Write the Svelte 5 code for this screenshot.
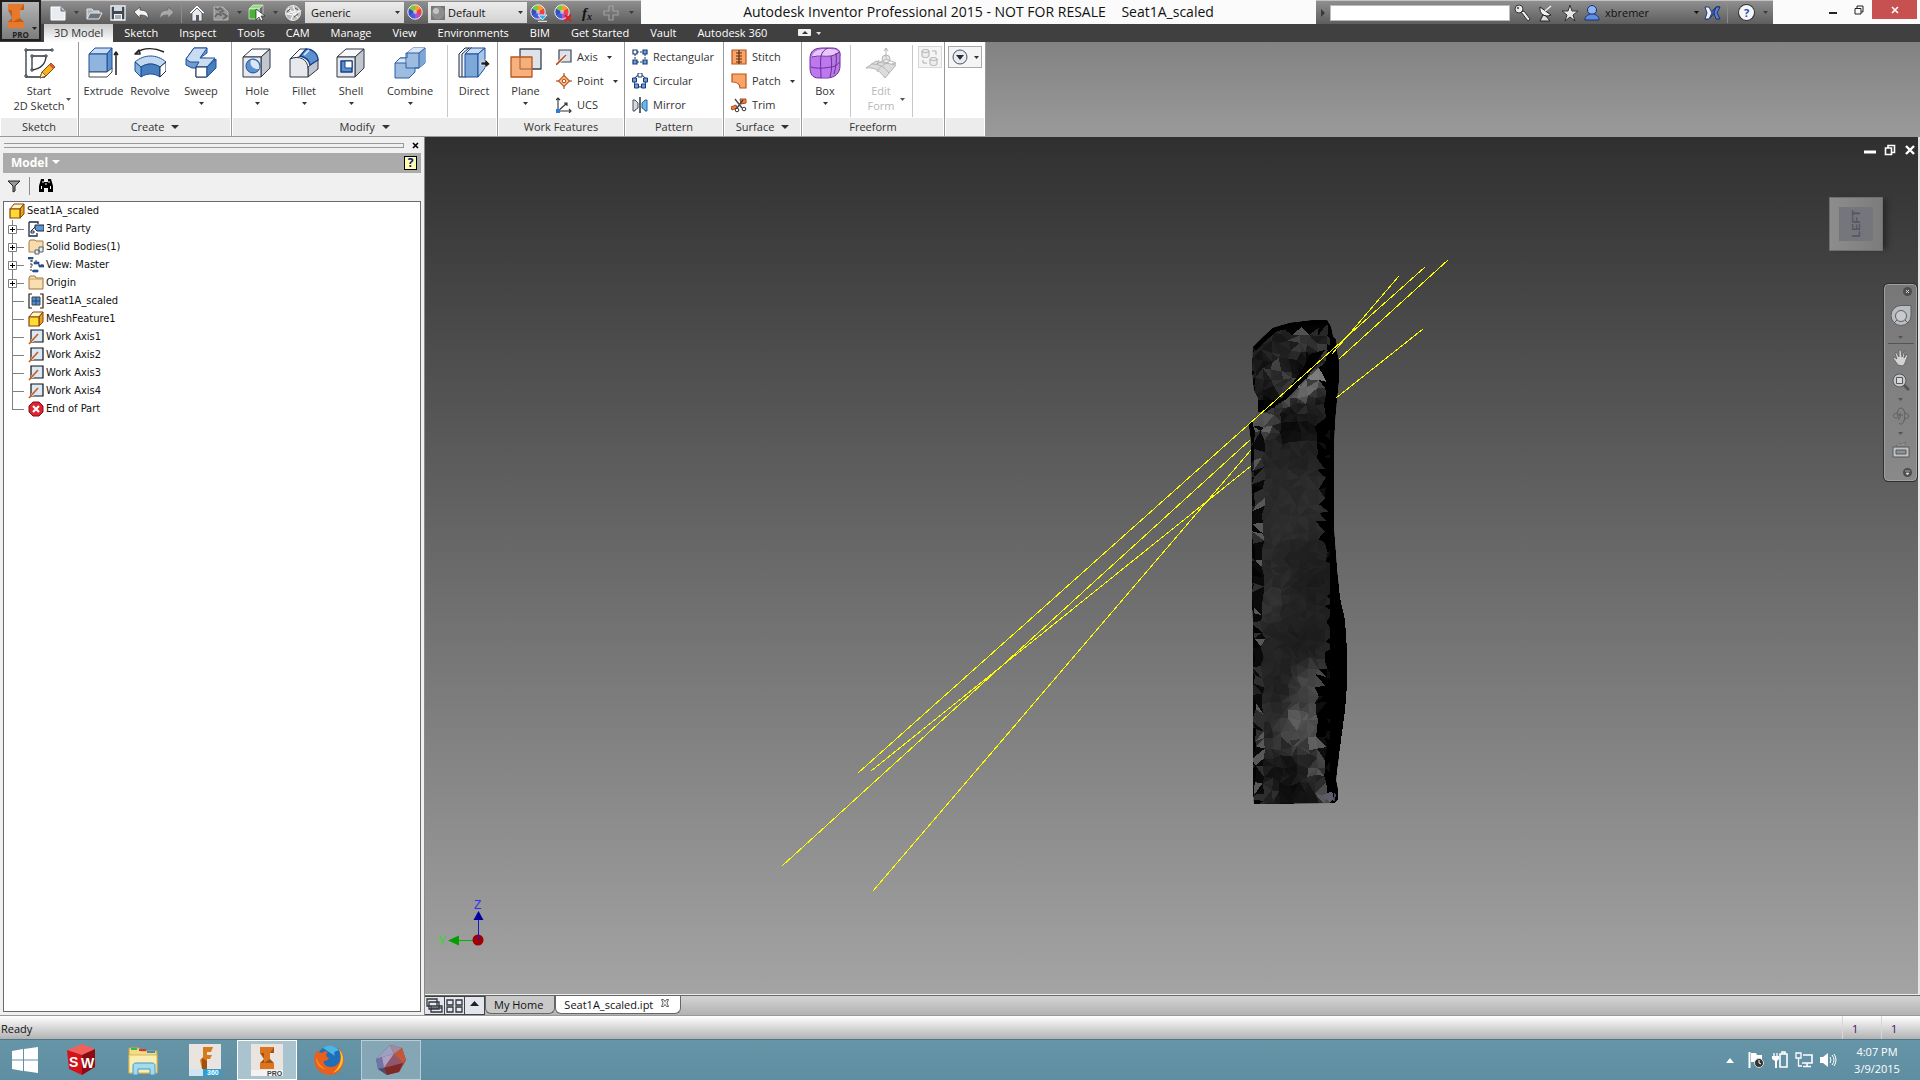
<script>
	const tabs = ['3D Model', 'Sketch', 'Inspect', 'Tools', 'CAM', 'Manage', 'View', 'Environments', 'BIM', 'Get Started', 'Vault', 'Autodesk 360'];
	let activeTab = $state('3D Model');

	const createTools = [
		{ icon: 'extrude', label: 'Extrude' },
		{ icon: 'revolve', label: 'Revolve' },
		{ icon: 'sweep', label: 'Sweep', menu: true }
	];
	const modifyTools = [
		{ icon: 'hole', label: 'Hole', menu: true },
		{ icon: 'fillet', label: 'Fillet', menu: true },
		{ icon: 'shell', label: 'Shell', menu: true },
		{ icon: 'combine', label: 'Combine', menu: true }
	];
	const workTools = [
		{ icon: 'axis', label: 'Axis', menu: true },
		{ icon: 'point', label: 'Point', menu: true },
		{ icon: 'ucs', label: 'UCS' }
	];
	const patternTools = [
		{ icon: 'rectangular', label: 'Rectangular' },
		{ icon: 'circular', label: 'Circular' },
		{ icon: 'mirror', label: 'Mirror' }
	];
	const surfaceTools = [
		{ icon: 'stitch', label: 'Stitch' },
		{ icon: 'patch', label: 'Patch', menu: true },
		{ icon: 'trim', label: 'Trim' }
	];

	const tree = [
		{ icon: 'party', label: '3rd Party', open: true },
		{ icon: 'bodies', label: 'Solid Bodies(1)', open: true },
		{ icon: 'view', label: 'View: Master', open: true },
		{ icon: 'folder', label: 'Origin', open: true },
		{ icon: 'block', label: 'Seat1A_scaled' },
		{ icon: 'part', label: 'MeshFeature1' },
		{ icon: 'workaxis', label: 'Work Axis1' },
		{ icon: 'workaxis', label: 'Work Axis2' },
		{ icon: 'workaxis', label: 'Work Axis3' },
		{ icon: 'workaxis', label: 'Work Axis4' },
		{ icon: 'end', label: 'End of Part' }
	];

	const taskbar = [
		{ icon: 'solidworks', label: 'SolidWorks' },
		{ icon: 'explorer', label: 'File Explorer' },
		{ icon: 'fusion', label: 'Fusion 360' },
		{ icon: 'inventor', label: 'Inventor', state: 'active' },
		{ icon: 'firefox', label: 'Firefox' },
		{ icon: 'meshapp', label: 'Mesh Enabler', state: 'running' }
	];

	// Work axes, each split where the mesh hides it.
	const axes = [
		[858, 773, 1425, 267],
		[782, 866, 1250, 440],
		[1339, 359, 1448, 260],
		[871, 771, 1251, 466],
		[1336, 398, 1423, 329],
		[873, 891, 1251, 450],
		[1332, 354, 1399, 276]
	];

	const outline =
		'1253,347 1262,338 1273,328 1290,323 1315,320 1327,320 1331,327 1333,337 1336,340 1337,352 1339,362 1339,378 1337,398 1335,420 1334,440 1334,530 1337,570 1340,598 1345,620 1347,650 1347,685 1345,710 1341,740 1337,770 1336,780 1338,790 1338,799 1335,803 1254,804 1253,790 1253,620 1252,600 1252,500 1251,440 1249,425 1258,412 1258,398 1254,390 1252,370';

	// Brightness samples on the body: x, y, level.
	const lights = [
		[1265, 365, 24], [1273, 369, 62], [1285, 345, 32], [1305, 339, 72], [1318, 340, 40], [1310, 352, 30],
		[1295, 370, 20], [1321, 351, 60], [1313, 361, 3], [1305, 375, 8], [1265, 388, 22], [1289, 382, 62],
		[1315, 374, 112], [1302, 388, 120], [1285, 400, 72], [1262, 420, 104], [1272, 413, 48], [1270, 400, 5],
		[1288, 415, 22], [1300, 412, 34], [1315, 405, 30], [1290, 430, 10], [1310, 425, 20], [1270, 450, 38],
		[1300, 450, 36], [1285, 490, 44], [1305, 500, 46], [1285, 530, 46], [1300, 560, 34], [1275, 570, 42],
		[1310, 580, 30], [1270, 600, 50], [1295, 610, 36], [1300, 640, 30], [1280, 660, 36], [1280, 690, 34],
		[1300, 698, 62], [1312, 690, 74], [1298, 720, 92], [1309, 728, 86], [1290, 730, 76], [1278, 712, 44],
		[1265, 735, 36], [1310, 740, 76], [1285, 745, 56], [1275, 765, 24], [1290, 768, 22], [1305, 760, 40],
		[1319, 770, 70], [1320, 780, 40], [1265, 790, 44], [1290, 792, 14], [1310, 795, 20], [1328, 797, 100]
	];

	// Where the lit face turns into the black side: y, x.
	const sideEdge = [[320, 1326], [345, 1328], [365, 1319], [400, 1322], [440, 1315], [500, 1321], [540, 1319], [575, 1331], [620, 1326], [650, 1328], [680, 1319], [715, 1312], [750, 1320], [785, 1326], [810, 1330]];

	function edgeAt(y) {
		for (let i = 1; i < sideEdge.length; i++) {
			const [y0, x0] = sideEdge[i - 1];
			const [y1, x1] = sideEdge[i];
			if (y <= y1) return x0 + ((x1 - x0) * (y - y0)) / (y1 - y0);
		}
		return 1330;
	}

	function rand(a, b) {
		const s = Math.sin(a * 127.1 + b * 311.7) * 43758.5453;
		return s - Math.floor(s);
	}

	function level(x, y) {
		const n = rand(x, y);
		if (x > edgeAt(y) + 2) return n > 0.82 && x < 1332 ? 14 : 1;
		if (y < 330) return 3;
		if (x < 1256) return n > 0.8 ? 32 : 3;
		if (x < 1262 && y > 425) return n > 0.84 ? 88 : n > 0.45 ? 46 : 10;
		let sum = 0;
		let weight = 0;
		for (const [lx, ly, l] of lights) {
			const w = 1 / ((lx - x) ** 2 + (ly - y) ** 2 + 4) ** 2;
			sum += w * l;
			weight += w;
		}
		const spread = y < 430 || y > 740 ? 0.65 : 0.2;
		return (sum / weight) * (0.95 - spread / 2 + n * spread);
	}

	function node(col, row) {
		return [1245 + col * 9 + (rand(col, row) - 0.5) * 5, 316 + row * 9 + (rand(row, col + 40) - 0.5) * 6];
	}

	function buildMesh() {
		const faces = [];
		for (let row = 0; row < 55; row++) {
			for (let col = 0; col < 12; col++) {
				const a = node(col, row);
				const b = node(col + 1, row);
				const c = node(col + 1, row + 1);
				const d = node(col, row + 1);
				const split = rand(col + 9, row) > 0.5 ? [[a, b, c], [a, c, d]] : [[a, b, d], [b, c, d]];
				for (const tri of split) {
					const x = (tri[0][0] + tri[1][0] + tri[2][0]) / 3;
					const y = (tri[0][1] + tri[1][1] + tri[2][1]) / 3;
					const v = Math.round(level(x, y));
					if (v < 2) continue;
					faces.push({
						points: tri.map((p) => p[0].toFixed(1) + ',' + p[1].toFixed(1)).join(' '),
						fill: `rgb(${v},${v},${v})`
					});
				}
			}
		}
		return faces;
	}

	const mesh = buildMesh();
</script>

{#snippet caret()}
	<svg class="caret" width="5" height="3" viewBox="0 0 5 3" aria-hidden="true"><path d="M0 0h5L2.500 3z" fill="currentColor" /></svg>
{/snippet}

{#snippet wheel(mark)}
	<svg width="18" height="18" viewBox="0 0 18 18" aria-hidden="true">
		<g stroke="none">
			<path d="M8 8V1a7 7 0 0 1 6 3.500z" fill="#ff9a2a" />
			<path d="M8 8l6-3.500a7 7 0 0 1 0 7z" fill="#f04040" />
			<path d="M8 8l6 3.500A7 7 0 0 1 8 15z" fill="#c04bd0" />
			<path d="M8 8v7a7 7 0 0 1-6-3.500z" fill="#3b62e0" />
			<path d="M8 8l-6 3.500a7 7 0 0 1 0-7z" fill="#3a49c8" />
			<path d="M8 8L2 4.500A7 7 0 0 1 8 1z" fill="#77cc3c" />
			<circle cx="8" cy="8" r="2" fill="#fff" opacity=".5" />
		</g>
		<circle cx="8" cy="8" r="7.200" fill="none" stroke="#e8eef5" />
		{#if mark === 'down'}
			<path d="M8 11h9l-4.500 5z" fill="#25b6ea" stroke="#fff" stroke-width=".8" /><path d="M8 17.300h9" stroke="#fff" />
		{:else if mark === 'clear'}
			<path d="M11 11l6 6M17 11l-6 6" stroke="#e01b1b" stroke-width="2" />
		{/if}
	</svg>
{/snippet}

{#snippet bigIcon(name)}
	<svg width="32" height="32" viewBox="0 0 32 32" stroke-linejoin="round" aria-hidden="true">
		{#if name === 'sketch'}
			<path d="M3 3h26M3 3v27h19" fill="none" stroke="#2f3640" stroke-width="1.300" />
			<path d="M9 9h14c0 7-5 13-14 14z" fill="none" stroke="#2f3640" stroke-width="1.300" />
			<g fill="#fff" stroke="#2f3640"><path d="M2 2h2v2H2zM28 2h2v2h-2zM2 28h2v2H2zM8 8h2v2H8zM22 8h2v2h-2zM8 22h2v2H8z" /></g>
			<path d="M17 31l2-6 9-9 4 4-9 9z" fill="#f6b21b" stroke="#7a4a10" />
			<path d="M17 31l2-6 4 4z" fill="#fbe7c0" stroke="#7a4a10" stroke-width=".8" /><path d="M26 18l4 4 2-2-4-4z" fill="#d8593a" />
		{:else if name === 'extrude'}
			<path d="M1 7l6-6h17l-5 6z" fill="#c9dcf2" stroke="#1b4f9c" /><path d="M19 7l5-6v21l-5 5z" fill="#5d8fcb" stroke="#1b4f9c" />
			<path d="M1 7h18v18H1z" fill="#8fb4de" stroke="#1b4f9c" /><path d="M1 25h18l5-4v4l-5 5H1z" fill="#fff" stroke="#434b57" />
			<path d="M28 28V6M26 8l2-3 2 3" fill="none" stroke="#222" stroke-width="1.500" />
		{:else if name === 'revolve'}
			<path d="M2 6c8-6 19-5 28-1M1 7l4-4 1 4z" fill="none" stroke="#222" stroke-width="1.600" />
			<path d="M1 15c9-8 22-8 31 0l-6 5c-6-4-13-4-19 0z" fill="#c2d8ef" stroke="#1b4f9c" />
			<path d="M7 20c6-4 13-4 19 0v10c-6-4-13-4-19 0z" fill="#4a7fbe" stroke="#1b4f9c" />
			<path d="M1 15v9l6 6V20z" fill="#87aedb" stroke="#1b4f9c" /><path d="M32 15v9l-6 6V20z" fill="#fff" stroke="#1a2a48" />
		{:else if name === 'sweep'}
			<path d="M1 12L9 1h13v5l-7 5 15 1v9l-9 9H11v-9H7l-6-3z" fill="#6f9cd0" stroke="#1b4f9c" />
			<path d="M1 12L9 1h13l-7 10h15l-8 9H11l3-5H5z" fill="#c9dcf2" stroke="#1b4f9c" />
			<path d="M11 20h11v10H11z" fill="#fff" stroke="#1a2a48" /><path d="M22 20l9-8v9l-9 9z" fill="#4a7fbe" stroke="#1b4f9c" />
		{:else if name === 'hole' || name === 'shell'}
			<path d="M2 10l9-8h18l-9 8z" fill="#f8f9fb" stroke="#2e3642" /><path d="M20 10l9-8v19l-9 9z" fill="#c2c6cf" stroke="#2e3642" />
			<path d="M2 10h18v20H2z" fill="#e7e9ee" stroke="#2e3642" />
			{#if name === 'hole'}
				<circle cx="12" cy="19" r="7" fill="#5d90cf" stroke="#1b4f9c" /><path d="M10 13a7 7 0 0 1 8 9c-6 1-10-4-8-9z" fill="#d9e7f6" />
			{:else}
				<path d="M6 14h11v11H6z" fill="#5d90cf" stroke="#16408a" stroke-width="1.500" /><path d="M10 14h7v7h-7z" fill="#fff" stroke="#16408a" />
			{/if}
		{:else if name === 'fillet'}
			<path d="M2 12l10-10h7l-8 8z" fill="#fafbfc" stroke="#2e3642" />
			<path d="M20 28V20l10-8v10l-10 8z" fill="#c2c6cf" stroke="#2e3642" />
			<path d="M2 12c9-4 18 0 18 10v8H2z" fill="#e7e9ee" stroke="#2e3642" />
			<path d="M12 9l6-7c7 0 12 5 12 11l-8 5c-1-5-5-8-10-9z" fill="#5d90cf" stroke="#16408a" stroke-width="1.300" /><path d="M16 8l5-5" stroke="#c7dcf5" stroke-width="2" />
		{:else if name === 'combine'}
			<path d="M1 16l5-5h7V6l6-5h12v15l-6 5h-4v4l-6 6H1z" fill="#9dbce0" stroke="#2b5ea8" />
			<path d="M13 6l6-5h12l-6 5z" fill="#d7e5f5" /><path d="M25 6l6-5v15l-6 5z" fill="#7da6d6" /><path d="M1 16l5-5h7v5z" fill="#d7e5f5" />
			<path d="M12 6h13v15H12V6M25 6l6-5M1 16h11M1 16l5-5h6" fill="none" stroke="#2b5ea8" />
		{:else if name === 'direct'}
			<path d="M1 7l6-6h7L8 7v23H1z" fill="#eef3fa" stroke="#1a2a48" /><path d="M4 30V7l7-6" fill="none" stroke="#1a2a48" />
			<path d="M7 7l6-6h14l-7 6z" fill="#c9dcf2" stroke="#1b4f9c" /><path d="M7 7h13v23H7z" fill="#7ea8d8" stroke="#1b4f9c" /><path d="M20 7l7-6v20l-7 9z" fill="#a9c5e8" stroke="#1b4f9c" />
			<path d="M23 15h4v-3l5 5-5 4v-3h-4z" fill="#1d1d1d" stroke="#fff" stroke-width=".6" />
		{:else if name === 'plane'}
			<path d="M10 2h21v20H10z" fill="#dfe3e9" stroke="#38424f" stroke-width="1.300" /><path d="M1 10h21v20H1z" fill="#f7a86f" fill-opacity=".9" stroke="#b9541a" stroke-width="1.300" /><path d="M10 10v12h12" fill="none" stroke="#a86a45" />
		{:else if name === 'box'}
			<path d="M1 12C1 4 5 1 14 1h9c6 0 9 3 8 9v9c0 7-5 12-13 12h-8C3 31 1 27 1 20z" fill="#b87be0" stroke="#6b2c9c" />
			<path d="M3 9c2-6 8-7 14-7 7 0 11 0 12 3-2 4-8 5-14 5-6 0-11 2-12-1z" fill="#e6c8fa" /><path d="M2 11c7-2 14 0 20-1 1 7 1 13-1 20-6 1-14 1-18-3z" fill="#bd78ef" />
			<path d="M3 10c7-2 13 0 19-1 4-1 7-3 9-4M22 9c1 7 1 14-1 21M2 20c6 2 14 1 20 0 4 0 8-4 9-5M12 9c-1 7 0 14 0 22M12 9c1-4 4-7 7-8M27 6c1 7 0 14-2 21" fill="none" stroke="#6b2c9c" />
		{:else if name === 'editform'}
			<g fill="#dcdcdc" stroke="#b4b4b4"><path d="M1 21l10-7c8 3 13 2 20 4l-11 13c-5-7-10-11-19-10z" /><path d="M6 17c10 0 14 4 18 9M22 16c-8 4-9 7-10 9" fill="none" />
			<circle cx="21" cy="12" r="4" fill="#e8e8e8" /><path d="M21 11V1M19 4l2-3 2 3M21 12l-9 5 2-4M21 12l10 4-4 1" fill="none" /></g>
		{/if}
	</svg>
{/snippet}

{#snippet smallIcon(name)}
	<svg width="16" height="16" viewBox="0 0 16 16" aria-hidden="true">
		{#if name === 'axis'}
			<path d="M3 1h12v12H3z" fill="#dde2e8" stroke="#3b4654" stroke-width="1.200" /><path d="M1 15L10 6" stroke="#fff" stroke-width="3" /><path d="M0 16L10 6" stroke="#b9481a" stroke-width="1.600" />
		{:else if name === 'point'}
			<path d="M8 0v16M0 8h16" stroke="#8a3c14" /><path d="M8 2.500L13.500 8 8 13.500 2.500 8z" fill="#fbc79a" stroke="#c05a1a" stroke-width="1.200" /><circle cx="8" cy="8" r="1.800" fill="#fff" stroke="#b04010" />
		{:else if name === 'ucs'}
			<path d="M2 14V1M0 3l2-2 2 2M2 14h13M13 12l2 2-2 2M2 14l9-8M8 6h3v3" fill="none" stroke="#333" stroke-width="1.100" /><path d="M0 12h4v4H0z" fill="#2b7dd4" />
		{:else if name === 'rectangular'}
			<path d="M5 3h6M5 13h6M3 5v6M13 5v6" stroke="#333" stroke-dasharray="2 1" /><path d="M1 1h4v4H1z" fill="#fff" stroke="#133a7a" stroke-width="1.200" /><path d="M11 1h4v4h-4zM1 11h4v4H1zM11 11h4v4h-4z" fill="#6fa0dd" stroke="#133a7a" stroke-width="1.200" />
		{:else if name === 'circular'}
			<circle cx="8" cy="8" r="6" fill="none" stroke="#333" /><path d="M6 0h4v4H6z" fill="#fff" stroke="#133a7a" /><path d="M.500 5h4v4h-4zM11.500 5h4v4h-4zM2.500 11h4v4h-4zM9.500 11h4v4h-4z" fill="#6fa0dd" stroke="#133a7a" />
		{:else if name === 'mirror'}
			<path d="M8 0v16" stroke="#222" stroke-width="1.400" /><path d="M1 3h2l3 3v5l-3 2v1H1z" fill="#d5dae1" stroke="#48515d" /><path d="M15 3h-2l-3 3v5l3 2v1h2z" fill="#6fb6e8" stroke="#1d6bab" />
		{:else if name === 'stitch'}
			<path d="M1 1h14v14H1z" fill="#f9a468" stroke="#b9541a" stroke-width="1.200" /><path d="M8 1v14M5 4h6M5 7h6M5 10h6M5 13h6" stroke="#5d2c0c" stroke-width="1.200" />
		{:else if name === 'patch'}
			<path d="M1 1h14v14H9c0-4-2-6-8-6z" fill="#f9a468" stroke="#b9541a" stroke-width="1.200" />
		{:else if name === 'trim'}
			<path d="M0 10l5-2 1 3-5 2zM9 2h6v4l-5 1z" fill="#f08040" stroke="#a8481a" /><path d="M4 2l7 9M12 3L6 11" stroke="#444" stroke-width="1.300" /><circle cx="6" cy="13" r="1.800" fill="none" stroke="#333" /><circle cx="13" cy="12" r="1.800" fill="none" stroke="#333" />
		{:else if name === 'part'}
			<path d="M1 6l4-5h10l-4 5z" fill="#fff7c2" stroke="#8a3f0c" /><path d="M11 6l4-5v10l-4 4z" fill="#e0a818" stroke="#8a3f0c" /><path d="M1 6h10v9H1z" fill="#ffdc32" stroke="#8a3f0c" stroke-width="1.200" />
		{:else if name === 'party'}
			<path d="M1 1h9v2M1 1v14h8v-3" fill="none" stroke="#1a2a48" stroke-width="1.300" /><path d="M3 10l5-5M3 10h3v2H3z" fill="none" stroke="#1a2a48" /><path d="M7 4h9v6H9L7 8z" fill="#5b97cc" stroke="#1a2a48" />
		{:else if name === 'bodies'}
			<path d="M1 13V3l1-2h5l1 1h7v9" fill="#f6dcae" stroke="#a27b45" /><path d="M1 13h7" stroke="#a27b45" /><path d="M7 11h4v4H7zM11 8h4v5h-4z" fill="#e8ecf2" stroke="#555f6d" />
		{:else if name === 'view'}
			<path d="M3 3v11h3M3 4h3M3 8h3M8 3v3M10 8h5" fill="none" stroke="#333" stroke-dasharray="2 1" /><path d="M0 0h5v2H0zM6 5h5v2H6zM11 8h5v2h-5zM5 13h5v2H5z" fill="#2c5fa6" stroke="#173a78" stroke-width=".6" />
		{:else if name === 'folder'}
			<path d="M1 14V3l1-2h5l1 2h7v11z" fill="#f9dfb0" stroke="#9a7341" /><path d="M1 4h14" stroke="#c69a5c" />
		{:else if name === 'block'}
			<path d="M4 1H1v14h3M12 1h3v14h-3" fill="none" stroke="#222" stroke-width="1.200" /><path d="M4 4h8v8H4z" fill="#4f8fcd" stroke="#444" /><path d="M8 4v8M4 8h8" stroke="#26486e" />
		{:else if name === 'workaxis'}
			<path d="M3 1h12v12H3z" fill="#d9e9f8" stroke="#111" stroke-width="1.200" /><path d="M6 13h-3v-3z" fill="#fff" /><path d="M1 15L10 5" stroke="#d0601c" stroke-width="1.800" />
		{:else if name === 'end'}
			<path d="M5 1h6l4 4v6l-4 4H5l-4-4V5z" fill="#dd2430" stroke="#7d1117" /><path d="M5 5l6 6M11 5l-6 6" stroke="#fff" stroke-width="2.200" />
		{/if}
	</svg>
{/snippet}

{#snippet qatIcon(name)}
	<svg width="18" height="18" viewBox="0 0 18 18" aria-hidden="true">
		{#if name === 'new'}
			<path d="M2 3h10l4 4v9H2z" fill="#e9edf2" stroke="#fff" /><path d="M12 3v4h4" fill="#aab2bd" stroke="#555" stroke-width=".8" />
		{:else if name === 'open'}
			<path d="M2 15V5h5l1 2h6v2" fill="#aeb5be" stroke="#e5e8ec" /><path d="M2 15l3-6h12l-3 6z" fill="#6c737d" stroke="#e5e8ec" />
		{:else if name === 'save'}
			<path d="M2 2h14v14H2z" fill="#3f4854" stroke="#f2f4f7" stroke-width="1.300" /><path d="M5 2h8v5H5z" fill="#d2d7de" /><path d="M5 10h8v6H5z" fill="#f5f6f8" /><path d="M6 12h6M6 14h6" stroke="#566" />
		{:else if name === 'undo'}
			<path d="M1 8l6-5v3c6 0 9 3 8 9-1-3-3-4-8-4v3z" fill="#f3f4f6" stroke="#4a4a4a" stroke-width=".8" />
		{:else if name === 'redo'}
			<path d="M17 8l-6-5v3c-6 0-9 3-8 9 1-3 3-4 8-4v3z" fill="#a8a8a8" stroke="#6a6a6a" stroke-width=".8" />
		{:else if name === 'home'}
			<path d="M1 9l8-8 8 8-2 1-6-6-6 6z" fill="#fff" stroke="#444" stroke-width=".6" /><path d="M4 9l5-5 5 5v8H4z" fill="#e6e9ed" stroke="#444" stroke-width=".7" /><path d="M8 11h3v6H8z" fill="#556" />
		{:else if name === 'update'}
			<path d="M2 3h9l5 5v8H2z" fill="#999" stroke="#b5b5b5" /><path d="M3 4l3 2 2-2 3 3-3 1 1 3-4-1-2 3M10 9l5 3-4 3" fill="none" stroke="#666" stroke-width="1.600" />
		{:else if name === 'pick'}
			<path d="M1 5l4-4h10l-4 4z" fill="#8fe07a" stroke="#eee" stroke-width=".7" /><path d="M11 5l4-4v9l-4 5z" fill="#6c6c6c" stroke="#ddd" stroke-width=".7" /><path d="M1 5h10v10H1z" fill="#4ab234" stroke="#eee" stroke-width=".7" /><path d="M8 5v11l3-3 2 4 2-1-2-4h4z" fill="#fff" stroke="#222" stroke-width=".7" />
		{:else if name === 'ball'}
			<circle cx="9" cy="9" r="7.500" fill="#b9b9b9" stroke="#e4e4e4" /><path d="M4 4l4 4-5 2 6 1-2 5M9 2l2 5 5 0-5 3 3 4M8 8l3-1v4z" fill="none" stroke="#f6f6f6" stroke-width="1.200" /><path d="M3 8l3-3M11 4l3 2M10 13l4-3" stroke="#555" />
		{:else if name === 'plus'}
			<path d="M7 2h4v5h5v4h-5v5H7v-5H2V7h5z" fill="none" stroke="#a0a0a0" stroke-width="1.200" />
		{:else if name === 'key'}
			<circle cx="6" cy="5" r="4" fill="#eee" stroke="#333" /><path d="M8 8l7 9 2-2-6-8z" fill="#eee" stroke="#333" /><circle cx="5" cy="4" r="1.200" fill="#666" />
		{:else if name === 'dish'}
			<path d="M3 3c-1 7 5 11 11 8z" fill="#f2f2f2" stroke="#222" /><path d="M8 7l6-5" stroke="#eee" stroke-width="1.600" /><path d="M6 11l-3 6h10l-4-5z" fill="#ddd" stroke="#222" />
		{:else if name === 'star'}
			<path d="M9 1l2 6h6l-5 4 2 6-5-4-5 4 2-6-5-4h6z" fill="#e6e6e6" stroke="#333" />
		{:else if name === 'user'}
			<circle cx="9" cy="6" r="4.500" fill="#8fb4f5" stroke="#15306a" /><path d="M2 16c0-4 3-5 5-6h4c2 1 5 2 5 6z" fill="#5c8ce6" stroke="#15306a" />
		{:else if name === 'exchange'}
			<path d="M17 3h-4L2 15h4z" fill="#3f66c2" stroke="#1d2f66" /><path d="M17 15h-4l-2-6 2-6h4l-3 6z" fill="#5b82d8" stroke="#1d2f66" /><path d="M2 3h4l3 6-3 6H2l2-6z" fill="#eceff8" stroke="#253a7a" />
		{/if}
	</svg>
{/snippet}

{#snippet taskIcon(name)}
	<svg width="32" height="32" viewBox="0 0 32 32" aria-hidden="true">
		{#if name === 'solidworks'}
			<path d="M2 6L17 0l13 5-13 6z" fill="#f1605a" /><path d="M2 6l15 5v20L4 25z" fill="#d3121c" /><path d="M17 11l13-6v18l-13 8z" fill="#8c0a10" />
			<text x="4" y="23" font-family="Liberation Sans" font-weight="700" font-size="14" fill="#fff">S</text><text x="16" y="24" font-family="Liberation Sans" font-weight="700" font-size="14" fill="#fff">W</text>
		{:else if name === 'explorer'}
			<path d="M2 29V4h10l2 3h16v22z" fill="#f4dc84" stroke="#c9a545" /><path d="M4 4h6v2H4z" fill="#39b54a" /><path d="M12 5h7v2h-7z" fill="#d33" /><path d="M20 7h8v2h-8z" fill="#3a8ed8" />
			<path d="M2 11h28v18H2z" fill="#fbeeb2" stroke="#d5b75c" /><path d="M6 31v-9c0-2 1-3 3-3h16c2 0 3 1 3 3v9h-5v-6H11v6z" fill="#a5d9f0" stroke="#3e9cc7" />
		{:else if name === 'fusion' || name === 'inventor'}
			<path d="M0 0h32v32H0z" fill="#e9e4df" />
			{#if name === 'fusion'}
				<path d="M14 3h10l-2 5h-4v3h5l-2 4h-3v10h-5l-2-9 3-3z" fill="#d87a1c" /><path d="M13 14l5 3v8h-5z" fill="#a3500e" />
				<path d="M0 25h32v7H0z" fill="#cfe6f2" /><path d="M14 25h18v7H14z" fill="#2d9fd2" /><text x="18" y="31" font-family="Liberation Sans" font-weight="700" font-size="7" fill="#fff">360</text>
			{:else}
				<path d="M9 3h14v6h-4v10h4v6H9v-6h4V9H9z" fill="#d9761f" /><path d="M9 9h4v10H9l4-4zM19 9l4-6v6zM13 19h10l-4-4z" fill="#a8500f" />
				<path d="M0 26h32v6H0z" fill="#f3f3f3" /><text x="16" y="32" font-family="Liberation Sans" font-weight="700" font-size="7" fill="#444">PRO</text>
			{/if}
		{:else if name === 'firefox'}
			<circle cx="17" cy="15" r="13" fill="#1f6fb8" /><path d="M10 4c5-4 14-2 16 3-4-1-6 2-4 5z" fill="#4cb4e6" />
			<path d="M4 6c-6 10-2 24 12 25 11 1 17-11 14-20-1-4-3-6-4-6 5 10-1 18-8 18-6 0-8-4-7-6 2 0 4-1 5-3-3-1-4-4-1-6-4-1-5 0-6 1-2 0-4-1-5-3z" fill="#e8601c" />
			<path d="M26 5c8 9 3 21-6 24 9-8 9-16 6-24z" fill="#fcc32b" /><path d="M3 13c2 6 5 10 10 12-6 0-10-5-10-12z" fill="#f89a24" />
		{:else if name === 'meshapp'}
			<path d="M15 1l12 3 4 12-7 12-12 3-9-6-2-10z" fill="#8b4a55" />
			<path d="M15 1L1 15l6-2 12-3z" fill="#9ba0c4" /><path d="M15 1l4 9 8-6z" fill="#a3899b" /><path d="M27 4l-8 6 9 9 3-3z" fill="#c4573a" />
			<path d="M1 15l6-2 2 11-6 1z" fill="#6d76a7" /><path d="M7 13l12-3-10 14z" fill="#a9a0c2" /><path d="M19 10l9 9-19 5z" fill="#91566a" /><path d="M28 19l3-3-7 12z" fill="#b4442b" /><path d="M9 24l19-5-4 9-12 3z" fill="#7d2a26" /><path d="M3 25l6-1 3 7z" fill="#4d4c72" />
		{/if}
	</svg>
{/snippet}

{#snippet bigTool(tool)}
	<button class="big">
		{@render bigIcon(tool.icon)}
		<span>{tool.label}</span>
		{#if tool.menu}{@render caret()}{/if}
	</button>
{/snippet}

{#snippet smallTool(tool)}
	<button class="small">
		{@render smallIcon(tool.icon)}
		<span>{tool.label}</span>
		{#if tool.menu}{@render caret()}{/if}
	</button>
{/snippet}

<div class="window">
	<header class="top">
		<button class="app-button" aria-label="Application menu">
			<svg width="18" height="26" viewBox="0 0 18 26" aria-hidden="true"><path d="M1 1h16v6h-4v12h4v6H1v-6h4V7H1z" fill="#e8792b" /><path d="M1 7h4v12H1l4-4zM13 7l4-6v6zM5 19h12l-4-4z" fill="#b85414" opacity=".8" /></svg>
			{@render caret()}
			<span>PRO</span>
		</button>
		<div class="bars">
			<div class="titlebar">
				<div class="qat">
					<button class="q" aria-label="New">{@render qatIcon('new')}</button>
					<button class="drop" aria-label="New options">{@render caret()}</button>
					<button class="q" aria-label="Open">{@render qatIcon('open')}</button>
					<button class="q" aria-label="Save">{@render qatIcon('save')}</button>
					<button class="q" aria-label="Undo">{@render qatIcon('undo')}</button>
					<button class="q" aria-label="Redo">{@render qatIcon('redo')}</button>
					<i class="bar-sep"></i>
					<button class="q" aria-label="Home">{@render qatIcon('home')}</button>
					<button class="q" aria-label="Update">{@render qatIcon('update')}</button>
					<button class="drop" aria-label="Update options">{@render caret()}</button>
					<button class="q" aria-label="Select">{@render qatIcon('pick')}</button>
					<button class="drop" aria-label="Select options">{@render caret()}</button>
					<button class="q" aria-label="Material browser">{@render qatIcon('ball')}</button>
					<label class="combo">
						<select aria-label="Material"><option>Generic</option></select>
						{@render caret()}
					</label>
					<button class="q" aria-label="Appearance browser">{@render wheel('')}</button>
					<label class="combo with-ball">
						<svg width="14" height="14" viewBox="0 0 14 14" aria-hidden="true"><path d="M0 0h14v14H0z" fill="#777" /><circle cx="7" cy="7" r="6.500" fill="#8d8d8d" /><circle cx="5" cy="5" r="3" fill="#c4c4c4" /></svg>
						<select aria-label="Appearance"><option>Default</option></select>
						{@render caret()}
					</label>
					<button class="q" aria-label="Adjust">{@render wheel('down')}</button>
					<button class="q" aria-label="Clear">{@render wheel('clear')}</button>
					<button class="q fx" aria-label="Parameters">f<sub>x</sub></button>
					<button class="q" aria-label="Add">{@render qatIcon('plus')}</button>
					<button class="drop last" aria-label="Customize">{@render caret()}</button>
				</div>
				<h1>Autodesk Inventor Professional 2015 - NOT FOR RESALE <span>Seat1A_scaled</span></h1>
				<div class="info">
					<button class="side" aria-label="Collapse">
						<svg width="4" height="8" viewBox="0 0 4 8" aria-hidden="true"><path d="M0 0l4 4-4 4z" fill="#3a3a3a" /></svg>
					</button>
					<input type="text" aria-label="Search help" />
					<button class="q" aria-label="Subscription">{@render qatIcon('key')}</button>
					<button class="q" aria-label="Communication">{@render qatIcon('dish')}</button>
					<button class="q" aria-label="Favorites">{@render qatIcon('star')}</button>
					<button class="user">{@render qatIcon('user')}<span>xbremer</span>{@render caret()}</button>
					<button class="q" aria-label="Exchange apps">{@render qatIcon('exchange')}</button>
					<i class="bar-sep"></i>
					<button class="help" aria-label="Help">?</button>
					<button class="drop" aria-label="Help options">{@render caret()}</button>
				</div>
				<div class="wincontrols">
					<button aria-label="Minimize"><svg width="10" height="10" viewBox="0 0 10 10"><path d="M1 8h8" stroke="#222" stroke-width="2" /></svg></button>
					<button aria-label="Restore"><svg width="10" height="10" viewBox="0 0 10 10"><path d="M1 3.500h6V9H1zM3 3V1h6v6H7" fill="none" stroke="#222" /></svg></button>
					<button class="close" aria-label="Close"><svg width="8" height="8" viewBox="0 0 8 8"><path d="M1 1l6 6M7 1L1 7" stroke="#fff" stroke-width="1.600" /></svg></button>
				</div>
			</div>
			<nav class="tabs">
				{#each tabs as tab (tab)}
					<button class:active={tab === activeTab} onclick={() => (activeTab = tab)}>{tab}</button>
				{/each}
				<button class="minimize" aria-label="Minimize ribbon">
					<svg width="24" height="8" viewBox="0 0 24 8" aria-hidden="true"><rect width="13" height="7" rx="1" fill="#f0f0f0" /><path d="M4 5l3-3 3 3z" fill="#333" /><path d="M18 3h5l-2 3z" fill="#ddd" /></svg>
				</button>
			</nav>
		</div>
	</header>

	<section class="ribbon">
		<div class="panel">
			<div class="tools single">
				<button class="big two-line">{@render bigIcon('sketch')}<span>Start<br />2D Sketch</span></button>
				<button class="side-drop" aria-label="Sketch options">{@render caret()}</button>
			</div>
			<h2>Sketch</h2>
		</div>
		<div class="panel">
			<div class="tools create">{#each createTools as tool (tool.label)}{@render bigTool(tool)}{/each}</div>
			<h2>Create <i class="tri"></i></h2>
		</div>
		<div class="panel">
			<div class="tools modify">
				{#each modifyTools as tool (tool.label)}{@render bigTool(tool)}{/each}
				<i class="tool-sep"></i>
				{@render bigTool({ icon: 'direct', label: 'Direct' })}
			</div>
			<h2>Modify <i class="tri"></i></h2>
		</div>
		<div class="panel">
			<div class="tools work">
				{@render bigTool({ icon: 'plane', label: 'Plane', menu: true })}
				<div class="stack">{#each workTools as tool (tool.label)}{@render smallTool(tool)}{/each}</div>
			</div>
			<h2>Work Features</h2>
		</div>
		<div class="panel">
			<div class="tools lone"><div class="stack">{#each patternTools as tool (tool.label)}{@render smallTool(tool)}{/each}</div></div>
			<h2>Pattern</h2>
		</div>
		<div class="panel">
			<div class="tools lone"><div class="stack">{#each surfaceTools as tool (tool.label)}{@render smallTool(tool)}{/each}</div></div>
			<h2>Surface <i class="tri"></i></h2>
		</div>
		<div class="panel">
			<div class="tools freeform">
				{@render bigTool({ icon: 'box', label: 'Box', menu: true })}
				<i class="tool-sep"></i>
				<button class="big two-line" disabled>{@render bigIcon('editform')}<span>Edit<br />Form</span></button>
				<button class="side-drop" aria-label="Edit form options">{@render caret()}</button>
				<i class="tool-sep"></i>
				<button class="framed" aria-label="Convert" disabled>
					<svg width="18" height="18" viewBox="0 0 18 18"><g fill="#ececec" stroke="#b0b0b0"><path d="M1 3v5c0 2 7 2 7 0V3c0-2-7-2-7 0s7 2 7 0M9 11v5c0 2 7 2 7 0v-5c0-2-7-2-7 0s7 2 7 0" /><path d="M11 3h4v4M2 12v3h4" fill="none" /></g></svg>
				</button>
			</div>
			<h2>Freeform</h2>
		</div>
		<div class="panel">
			<div class="tools lone">
				<button class="framed wide" aria-label="Select options">
					<svg width="16" height="16" viewBox="0 0 16 16"><circle cx="8" cy="8" r="7" fill="#e8ebef" stroke="#4a5360" /><path d="M4 6h8l-4 5z" fill="#252c3a" /></svg>
					{@render caret()}
				</button>
			</div>
			<h2></h2>
		</div>
		<div class="ribbon-rest"></div>
	</section>

	<main>
		<aside>
			<div class="grip"><i></i><button aria-label="Close browser"><svg width="7" height="7" viewBox="0 0 7 7"><path d="M1 1l5 5M6 1L1 6" stroke="#000" stroke-width="1.600" /></svg></button></div>
			<div class="browser-title">
				<button>Model <i class="tri"></i></button>
				<button class="hint" aria-label="Help">?</button>
			</div>
			<div class="browser-tools">
				<button aria-label="Filter"><svg width="14" height="13" viewBox="0 0 14 13"><path d="M1 1h12L8 6v5l-2 1V6z" fill="#999" stroke="#222" /></svg></button>
				<i></i>
				<button aria-label="Find"><svg width="16" height="14" viewBox="0 0 16 14"><path d="M3 0h3v3h4V0h3l2 7v6h-5V9H6v4H1V7z" fill="#000" /><path d="M3.500 7v3M12.500 7v3M8 4v2M5 2v2M11 2v2" stroke="#fff" /></svg></button>
			</div>
			<div class="tree">
				<div class="root">{@render smallIcon('part')}<span>Seat1A_scaled</span></div>
				<ul>
					{#each tree as item (item.label + item.icon)}
						<li>
							<span class="branch">{#if item.open}<button class="expand" aria-label="Expand {item.label}"><svg width="9" height="9" viewBox="0 0 9 9"><path d="M.500.500h8v8h-8z" fill="#fff" stroke="#808080" /><path d="M2 4.500h5M4.500 2v5" stroke="#000" /></svg></button>{/if}</span>
							{@render smallIcon(item.icon)}<span class="name">{item.label}</span>
						</li>
					{/each}
				</ul>
			</div>
		</aside>

		<div class="document">
			<div class="viewport">
				<svg class="scene" viewBox="425 137 1493 857" preserveAspectRatio="xMinYMin slice" aria-label="Model view">
					<defs><clipPath id="body-outline"><polygon points={outline} /></clipPath></defs>
					<polygon points={outline} fill="#000" shape-rendering="crispEdges" />
					<g clip-path="url(#body-outline)" shape-rendering="crispEdges">
						{#each mesh as face, i (i)}<polygon points={face.points} fill={face.fill} />{/each}
						<path d="M1253 347L1273 328 1290 323 1329 320" fill="none" stroke="#000" stroke-width="9" />
						<path d="M1332 325v478M1336 340v450" fill="none" stroke="#000" stroke-width="5" />
						<path d="M1325 350L1308 376 1288 398 1266 412 1258 412 1258 400 1280 400 1302 370 1310 354z" fill="#020202" />
						<path d="M1322 796l8-4 3 1v7l-3 2z" fill="#5c5c6c" /><path d="M1334 793l2 1-1 7h-2z" fill="#4a4a52" />
					</g>
					<g stroke="#ffff00" shape-rendering="crispEdges">
						{#each axes as [x1, y1, x2, y2], i (i)}<line {x1} {y1} {x2} {y2} />{/each}
					</g>
					<path d="M459 940.500h19" stroke="#00b400" /><path d="M448 940.500l11-5v10z" fill="#00a000" />
					<circle cx="478" cy="940" r="5.500" fill="#a00000" />
					<path d="M478.500 940v-22" stroke="#1818c8" /><path d="M478.500 911l5 9h-10z" fill="#0000a0" />
					<text x="474" y="909" fill="#3030f0">Z</text><text x="438" y="945" fill="#20e020">Y</text>
				</svg>
				<div class="doc-controls">
					<button aria-label="Minimize document"><svg width="12" height="12" viewBox="0 0 12 12"><path d="M0 8h12" stroke="#fff" stroke-width="3" /></svg></button>
					<button aria-label="Restore document"><svg width="12" height="12" viewBox="0 0 12 12"><path d="M1.500 4h6v6.500h-6zM4 3.500v-2h6.500v7H8" fill="none" stroke="#fff" stroke-width="1.600" /></svg></button>
					<button aria-label="Close document"><svg width="12" height="12" viewBox="0 0 12 12"><path d="M2 2l8 8M10 2l-8 8" stroke="#fff" stroke-width="2.400" /></svg></button>
				</div>
				<button class="viewcube"><span>LEFT</span></button>
				<div class="navbar">
					<button class="corner" aria-label="Close navigation bar"><svg width="9" height="9" viewBox="0 0 9 9"><circle cx="4.500" cy="4.500" r="4.500" fill="#4d4d4d" /><path d="M3 3l3 3M6 3L3 6" stroke="#ddd" /></svg></button>
					<button class="steer" aria-label="Steering wheel"><svg width="22" height="22" viewBox="0 0 22 22"><path d="M11 .500h10V11A10 10 0 1 1 11 .500z" fill="#b9bcc0" stroke="#5c5f62" /><circle cx="11" cy="11" r="5.500" fill="#c8cacd" stroke="#5c5f62" /><path d="M4 18l3-3M18 18l-3-3" stroke="#5c5f62" /></svg>{@render caret()}</button>
					<hr />
					<button aria-label="Pan"><svg width="18" height="18" viewBox="0 0 18 18"><path d="M6 16L1 9l1-1 3 2-2-6 1-1 3 5V1h2l1 7 2-6h1l-1 7 3-4 1 1-3 8-2 3z" fill="#d3d3d3" stroke="#5c5f62" stroke-width=".8" /></svg></button>
					<button aria-label="Zoom"><svg width="18" height="18" viewBox="0 0 18 18"><path d="M12 12l5 5" stroke="#555" stroke-width="3" /><circle cx="7.500" cy="7.500" r="6.500" fill="#c4c6c8" stroke="#55585a" /><path d="M4.500 4.500h6v6h-6z" fill="#d9d9d9" stroke="#55585a" /></svg>{@render caret()}</button>
					<button aria-label="Orbit"><svg width="18" height="18" viewBox="0 0 18 18"><g fill="none" stroke="#5c5f62"><path d="M7 13C4 5 6 1 9 1s5 5 3 13c-1 3-4 4-5 2M5 6C0 7 0 11 5 11M13 6c5 1 5 5 0 6" /><path d="M8 6v5M6 8h5" /></g></svg>{@render caret()}</button>
					<button aria-label="Look at"><svg width="18" height="18" viewBox="0 0 18 18"><path d="M1 6h16v10H1z" fill="#bfc1c3" stroke="#55585a" /><path d="M4 9h10v4H4z" fill="#8e9092" stroke="#55585a" /><path d="M4 5l4-3v2l6-3-3 4z" fill="#aaa" stroke="#666" stroke-width=".7" /></svg></button>
					<button class="corner" aria-label="Navigation bar options"><svg width="9" height="9" viewBox="0 0 9 9"><circle cx="4.500" cy="4.500" r="4.500" fill="#4d4d4d" /><path d="M2 3h5M3 5h3l-1.500 2z" fill="#ddd" stroke="#ddd" stroke-width=".6" /></svg></button>
				</div>
			</div>
			<div class="doc-tabs">
				<button class="sq" aria-label="Cascade"><svg width="17" height="17" viewBox="0 0 17 17"><g fill="#e6e9ee" stroke="#30343c" stroke-width="1.300"><path d="M1 2h10v7H1zM3 5h10v7H3zM5 9h11v6H5z" /><path d="M5 11h11" /></g></svg></button>
				<button class="sq" aria-label="Tile"><svg width="17" height="17" viewBox="0 0 17 17"><g fill="#e6e9ee" stroke="#30343c" stroke-width="1.300"><path d="M1 3h6v5H1zM10 3h6v5h-6zM1 10h6v5H1zM10 10h6v5h-6z" /></g></svg></button>
				<button class="sq up" aria-label="Document list"><svg width="9" height="5" viewBox="0 0 9 5"><path d="M0 5h9L4.500 0z" fill="#222" /></svg></button>
				<button class="doc-tab">My Home</button>
				<button class="doc-tab current">Seat1A_scaled.ipt <svg width="8" height="8" viewBox="0 0 8 8"><path d="M.500.500h2l1.500 2 1.500-2h2L6 4l1.500 3.500h-2L4 5.500 2.500 7.500h-2L2 4z" fill="#eee" stroke="#555" stroke-width=".9" /></svg></button>
			</div>
		</div>
	</main>

	<footer class="status"><span>Ready</span><b>1</b><b>1</b></footer>

	<div class="taskbar">
		<button class="start" aria-label="Start"><svg width="26" height="26" viewBox="0 0 26 26"><path d="M0 4l11-2v10.500H0zM12 2l14-2v12.500H12zM0 13.500h11V24L0 22zM12 13.500h14V26l-14-2z" fill="#fff" /></svg></button>
		{#each taskbar as app (app.icon)}
			<button class="task {app.state ?? ''}" aria-label={app.label}>{@render taskIcon(app.icon)}</button>
		{/each}
		<div class="tray">
			<button class="more" aria-label="Show hidden icons"><svg width="8" height="5" viewBox="0 0 8 5"><path d="M0 5h8L4 0z" fill="#fff" /></svg></button>
			<svg width="18" height="18" viewBox="0 0 18 18"><path d="M2.500 1v16" stroke="#fff" stroke-width="2" /><path d="M4 2h5l1 2h5v7H4z" fill="#fff" /><circle cx="12" cy="12" r="4.500" fill="#333" stroke="#ddd" /><path d="M12 9v3l2 1" fill="none" stroke="#fff" /></svg>
			<svg width="18" height="18" viewBox="0 0 18 18"><path d="M9 3h7v13H9zM11 1h3v2h-3z" fill="none" stroke="#fff" stroke-width="1.600" /><path d="M3 2v3M6 2v3" stroke="#fff" stroke-width="1.300" /><path d="M1 5h7v3L6 10v7H4v-7L1 8z" fill="#fff" /></svg>
			<svg width="18" height="18" viewBox="0 0 18 18"><path d="M8 4h9v8H7M12 12v3M8 15.500h8" fill="none" stroke="#fff" stroke-width="1.600" /><path d="M1 2h5v5H1zM3.500 7v8H7" fill="none" stroke="#fff" stroke-width="1.300" /></svg>
			<svg width="18" height="18" viewBox="0 0 18 18"><path d="M1 6h3l5-4v14l-5-4H1z" fill="#fff" /><path d="M11 6q2 3 0 6M13 4q4 5 0 10M15 3q4 6 0 12" fill="none" stroke="#fff" /></svg>
			<time>4:07 PM<br />3/9/2015</time>
		</div>
	</div>
</div>

<style>
	:global(body) {
		margin: 0;
	}

	.window {
		display: flex;
		flex-direction: column;
		height: 100vh;
		min-height: 600px;
		overflow: hidden;
		background: #f0f0f0;
		color: #333;
		font-family: 'Open Sans', 'Noto Sans', sans-serif;
		font-size: 11px;
		line-height: 14px;
	}

	button {
		display: flex;
		align-items: center;
		justify-content: center;
		padding: 0;
		border: 0;
		background: none;
		color: inherit;
		font: inherit;
		white-space: nowrap;
	}

	svg {
		display: block;
		flex: none;
	}

	h1,
	h2,
	ul {
		margin: 0;
		padding: 0;
		font-weight: 400;
	}

	.tri {
		display: inline-block;
		border: 4px solid transparent;
		border-top: 4px solid currentColor;
		border-bottom: 0;
		margin: 0 0 2px 4px;
	}

	/* title bar and tabs */
	.top {
		display: flex;
		flex: none;
		height: 42px;
		background: #404040;
	}

	.app-button {
		display: grid;
		grid-template-columns: 27px 10px;
		grid-template-rows: 28px 9px;
		box-sizing: border-box;
		width: 41px;
		height: 41px;
		border: 2px solid #1f1f1f;
		background: linear-gradient(#b4b4b4, #7c7c7c);
		color: #222;
		align-content: start;
		align-items: center;
		justify-items: center;
	}

	.app-button .caret,
	.app-button span {
		align-self: end;
	}

	.app-button span {
		grid-column: 1 / -1;
		font-size: 8px;
		line-height: 8px;
		font-weight: 700;
	}

	.bars {
		flex: 1;
		min-width: 0;
	}

	.titlebar {
		display: flex;
		height: 24px;
		background: #fbfbfb;
	}

	.qat,
	.info {
		display: flex;
		align-items: center;
		flex: none;
		box-sizing: border-box;
		height: 24px;
		border-top: 1px solid #c4c0c4;
		background: linear-gradient(#8f8f8f, #5d5d5d);
	}

	.qat {
		width: 600px;
		padding-left: 5px;
	}

	.q {
		width: 24px;
		height: 22px;
	}

	.drop {
		width: 12px;
		height: 22px;
		color: #3c3c3c;
	}

	.last {
		width: 16px;
	}

	.bar-sep {
		width: 1px;
		height: 20px;
		margin: 0 3px;
		background: #8c8c8c;
	}

	.combo {
		display: flex;
		align-items: center;
		box-sizing: border-box;
		width: 99px;
		height: 21px;
		padding: 0 4px 0 6px;
		background: linear-gradient(#ececec, #d2d2d2);
		color: #333;
	}

	.with-ball {
		padding-left: 3px;
		gap: 3px;
	}

	.combo select {
		flex: 1;
		min-width: 0;
		padding: 0;
		border: 0;
		background: none;
		appearance: none;
		color: #111;
		font: inherit;
	}

	.fx {
		color: #111;
		font-family: 'Liberation Serif', serif;
		font-size: 15px;
		font-style: italic;
		font-weight: 700;
	}

	.fx sub {
		font-size: 10px;
		align-self: flex-end;
	}

	h1 {
		flex: 1;
		min-width: 0;
		overflow: hidden;
		color: #111;
		font-size: 14px;
		line-height: 24px;
		text-align: center;
		white-space: nowrap;
	}

	h1 span {
		margin-left: 12px;
	}

	.info {
		width: 457px;
	}

	.side {
		width: 14px;
		height: 22px;
	}

	.info input {
		box-sizing: border-box;
		width: 180px;
		height: 16px;
		border: 1px solid #bbb;
		background: #fff;
	}

	.user {
		width: 118px;
		height: 22px;
		gap: 4px;
		padding: 0 1px;
		color: #111;
	}

	.user span {
		flex: 1;
		text-align: left;
	}

	.help {
		width: 15px;
		height: 15px;
		margin-left: 8px;
		margin-right: 5px;
		border-radius: 50%;
		background: #f4f6fa;
		box-shadow: 0 0 0 1px #333;
		color: #1a4fae;
		font-weight: 700;
	}

	.wincontrols {
		display: flex;
		align-items: flex-start;
		flex: none;
		width: 144px;
		justify-content: flex-end;
		padding-right: 3px;
	}

	.wincontrols button {
		width: 26px;
		height: 19px;
	}

	.wincontrols .close {
		width: 45px;
		background: #c75050;
	}

	.tabs {
		display: flex;
		gap: 1px;
		height: 18px;
		padding-left: 3px;
		color: #fff;
	}

	.tabs button {
		padding: 0 10px;
		height: 18px;
	}

	.tabs .active {
		background: linear-gradient(#c9c9c9, #fff);
		color: #333;
	}

	.tabs .minimize {
		padding: 0 20px;
	}

	/* ribbon */
	.ribbon {
		display: grid;
		grid-template-columns: 79px 153px 266px 127px 99px 78px 143px 41px 1fr;
		flex: none;
		height: 94px;
		border-bottom: 1px solid #999;
		background: #fff;
	}

	.panel {
		display: flex;
		flex-direction: column;
		border-right: 1px solid #9a9a9a;
	}

	.panel h2 {
		flex: none;
		height: 18px;
		margin: 0 1px;
		background: #ececec;
		font-size: 11px;
		line-height: 17px;
		text-align: center;
	}

	.ribbon-rest {
		background: linear-gradient(#828282, #9a9a9a);
	}

	.tools {
		display: grid;
		flex: 1;
		align-items: start;
		padding-top: 5px;
	}

	.single {
		grid-template-columns: 54px 8px;
		padding-left: 12px;
	}

	.create {
		grid-template-columns: 47px 46px 56px;
		padding-left: 1px;
	}

	.modify {
		grid-template-columns: 48px 46px 48px 70px 6px 46px;
		padding-left: 1px;
	}

	.work {
		grid-template-columns: 55px 1fr;
	}

	.freeform {
		grid-template-columns: 46px 14px 38px 10px 5px 26px;
	}

	.lone {
		padding-left: 4px;
	}

	.big {
		flex-direction: column;
		justify-content: flex-start;
		height: 70px;
	}

	.big span {
		margin-top: 4px;
		line-height: 16px;
	}

	.big .caret {
		margin-top: 3px;
	}

	.two-line span {
		line-height: 15px;
	}

	.big:disabled {
		color: #b8b8b8;
	}

	.side-drop {
		justify-content: flex-start;
		height: 14px;
		margin-top: 45px;
		color: #555;
	}

	.tool-sep {
		width: 1px;
		height: 72px;
		margin-left: 2px;
		background: #c8c8c8;
		margin-top: -2px;
	}

	.stack {
		display: grid;
		grid-auto-rows: 24px;
		justify-items: start;
		padding-left: 3px;
		margin-top: -2px;
	}

	.stack .small {
		height: 24px;
		gap: 5px;
	}

	.small .caret {
		margin-left: 4px;
	}

	.framed {
		width: 24px;
		height: 22px;
		border: 1px solid #d8d8d8;
		margin-left: 3px;
		margin-top: -1px;
		background: #f5f5f5;
	}

	.framed.wide {
		width: 34px;
		gap: 6px;
		margin-left: -1px;
		border-color: #aaa;
	}

	/* model browser */
	main {
		display: flex;
		flex: 1;
		min-height: 0;
	}

	aside {
		display: flex;
		flex-direction: column;
		flex: none;
		box-sizing: border-box;
		width: 425px;
		padding: 2px 3px 3px;
		border-right: 1px solid #8a8a8a;
		font-family: 'DejaVu Sans Condensed', 'DejaVu Sans', sans-serif;
		font-size: 11px;
	}

	.grip {
		display: flex;
		align-items: center;
		justify-content: space-between;
		height: 12px;
	}

	.grip i {
		flex: 1;
		height: 3px;
		margin: 0 5px 0 1px;
		border: 1px solid #999;
		border-left: 0;
	}

	.grip button {
		width: 12px;
	}

	.browser-title {
		display: flex;
		justify-content: space-between;
		align-items: center;
		height: 20px;
		margin-top: 2px;
		padding: 0 4px 0 8px;
		background: #ababab;
		color: #fff;
		font-family: 'Open Sans', sans-serif;
		font-size: 12px;
		font-weight: 700;
	}

	.hint {
		width: 13px;
		height: 14px;
		border: 1px solid #000;
		background: #ffffb0;
		color: #00128a;
		line-height: 12px;
	}

	.browser-tools {
		display: flex;
		align-items: center;
		box-sizing: border-box;
		height: 28px;
		padding: 0 0 2px 4px;
		gap: 8px;
	}

	.browser-tools i {
		width: 1px;
		height: 18px;
		background: #8c8c8c;
	}

	.tree {
		flex: 1;
		border: 1px solid #6a6a6a;
		background: #fff;
		color: #111;
	}

	.root {
		display: flex;
		align-items: center;
		height: 18px;
		padding-left: 5px;
		gap: 2px;
	}

	.tree li {
		display: flex;
		align-items: center;
		height: 18px;
		padding-left: 4px;
	}

	.branch {
		display: flex;
		align-items: center;
		align-self: stretch;
		width: 16px;
		margin-right: 4px;
		background:
			linear-gradient(#808080, #808080) 4px 0 / 1px 100% no-repeat,
			linear-gradient(#808080, #808080) 4px 9px / 12px 1px no-repeat;
	}

	li:last-child .branch {
		background:
			linear-gradient(#808080, #808080) 4px 0 / 1px 10px no-repeat,
			linear-gradient(#808080, #808080) 4px 9px / 12px 1px no-repeat;
	}

	.name {
		margin-left: 2px;
	}

	/* document area */
	.document {
		display: flex;
		flex-direction: column;
		flex: 1;
		min-width: 0;
	}

	.viewport {
		position: relative;
		flex: 1;
		min-height: 0;
		border-right: 2px solid #e6e6e6;
		border-bottom: 1px solid #eee;
		background: linear-gradient(#303030, #a4a4a4);
	}

	.scene {
		position: absolute;
		inset: 0;
		width: 100%;
		height: 100%;
	}

	.scene text {
		font-family: 'Liberation Sans', sans-serif;
		font-size: 12px;
	}

	.doc-controls {
		position: absolute;
		top: 7px;
		right: 2px;
		display: flex;
		gap: 8px;
	}

	.viewcube {
		position: absolute;
		top: 60px;
		right: 35px;
		width: 54px;
		height: 54px;
		border: 1px solid #6f6f6f;
		background: linear-gradient(90deg, #8d8d8d, #7c7c7c);
		box-shadow: 6px 0 5px -2px #2a2a2a;
	}

	.viewcube span {
		display: flex;
		align-items: center;
		justify-content: center;
		width: 34px;
		height: 34px;
		background: #74767c;
		color: #53555f;
		font-family: 'Liberation Sans', sans-serif;
		font-size: 11px;
		font-weight: 700;
		writing-mode: sideways-lr;
	}

	.navbar {
		position: absolute;
		top: 147px;
		right: 1px;
		display: flex;
		flex-direction: column;
		align-items: center;
		box-sizing: border-box;
		width: 33px;
		height: 197px;
		padding: 2px;
		border: 1px solid #a0a0a0;
		border-radius: 4px;
		outline: 1px solid #2f2f2f;
		background: linear-gradient(#777, #898989);
		color: #555;
	}

	.navbar button {
		flex: none;
		flex-direction: column;
		gap: 7px;
		margin-bottom: 6px;
	}

	.navbar .steer {
		gap: 9px;
	}

	.navbar .corner {
		align-self: flex-end;
		margin: 0 2px 9px 0;
	}

	.navbar .corner:last-child {
		margin: auto 2px 1px 0;
	}

	.navbar hr {
		width: 26px;
		height: 1px;
		margin: -2px 0 5px;
		border: 0;
		background: #555;
		flex: none;
	}

	.doc-tabs {
		display: flex;
		flex: none;
		height: 19px;
		border-top: 1px solid #666;
		background: linear-gradient(#d4d4d4, #b2b2b2);
		color: #111;
	}

	.sq {
		width: 20px;
		box-sizing: border-box;
		border: 1px solid #444;
		border-left: 0;
		background: #e3e6ec;
	}

	.up {
		align-items: flex-start;
		padding-top: 4px;
	}

	.doc-tab {
		box-sizing: border-box;
		height: 18px;
		padding: 0 11px 0 8px;
		border: 1px solid #666;
		border-top: 0;
		border-radius: 0 0 6px 6px;
		background: #c9c9c9;
	}

	.current {
		gap: 8px;
		background: #fff;
	}

	.current svg {
		margin-bottom: 4px;
	}

	/* status and task bars */
	.status {
		display: flex;
		flex: none;
		height: 23px;
		border-top: 1px solid #999;
		border-bottom: 1px solid #4e7688;
		background: linear-gradient(#fff, #b2b2b2);
		color: #111;
		line-height: 26px;
	}

	.status span {
		flex: 1;
		padding-left: 1px;
	}

	.status b {
		width: 29px;
		padding-left: 9px;
		border-left: 1px solid #d8d8d8;
		color: #40106a;
		font-weight: 400;
	}

	.taskbar {
		display: flex;
		flex: none;
		align-items: stretch;
		height: 40px;
		background: linear-gradient(#6795a8, #5f8da1);
	}

	.start {
		width: 50px;
	}

	.task {
		box-sizing: border-box;
		width: 60px;
		margin: 0 1px;
		border: 1px solid transparent;
	}

	.active.task {
		border-color: #fff;
		background: #a9c3cf;
	}

	.running {
		border-color: #b9cdd6;
		background: #84a6b5;
	}

	.tray {
		display: flex;
		align-items: center;
		margin-left: auto;
		gap: 6px;
		padding-right: 16px;
		color: #fff;
	}

	.more {
		margin-right: 7px;
	}

	.tray time {
		min-width: 54px;
		margin-left: 7px;
		line-height: 17px;
		text-align: center;
	}
</style>
